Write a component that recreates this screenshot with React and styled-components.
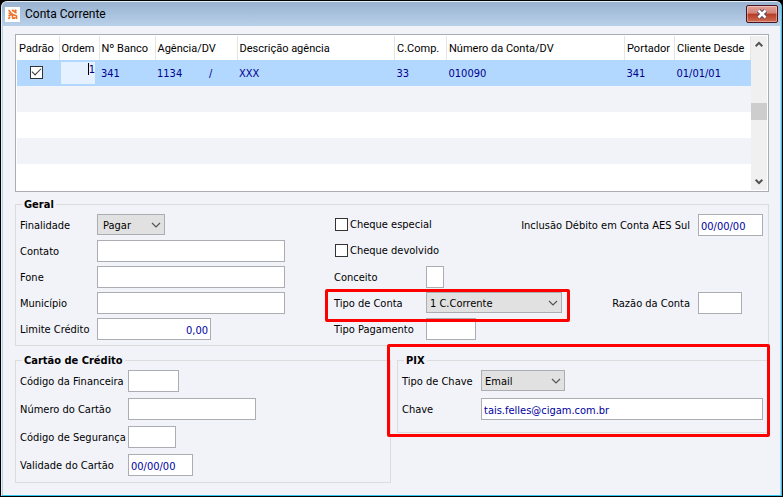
import React, { useState } from 'react';
import styled, { createGlobalStyle, css } from 'styled-components';

const colors = {
  face: '#f2f3f9',
  line: '#dcdcdc',
  edge: '#abadb3',
  navy: '#00008b',
  selected: '#b3d8ff',
  mark: '#ff0000',
};

const fonts = {
  form: '"DejaVu Sans Condensed", "DejaVu Sans", Tahoma, sans-serif',
  grid: 'Roboto, "Liberation Sans", sans-serif',
};

const GlobalStyle = createGlobalStyle`
  *, *::before, *::after {
    box-sizing: border-box;
  }

  body {
    margin: 0;
    background: #000000;
    color: #000000;
    font-family: ${fonts.form};
    font-size: 11px;
  }
`;

const Window = styled.main`
  display: flex;
  flex-direction: column;
  min-height: 100vh;
  padding: 1px;
  background: #000000;
`;

const Frame = styled.div`
  flex: 1;
  display: flex;
  flex-direction: column;
  border: 1px solid #e6f0fa;
  border-right-color: #35c6ee;
  border-bottom-color: #35c6ee;
  border-radius: 6px 6px 0 0;
  background: ${colors.face};
  overflow: hidden;
`;

const TitleBar = styled.header`
  display: flex;
  align-items: center;
  gap: 5px;
  height: 24px;
  padding: 0 3px;
  background: linear-gradient(#98b2d0, #b9d0e9);
`;

const Logo = styled.svg`
  width: 15px;
  height: 15px;
  background: #ffffff;
`;

const Title = styled.h1`
  flex: 1;
  margin: 0;
  font-family: ${fonts.grid};
  font-size: 12px;
  font-weight: 400;
  line-height: 26px;
`;

const CloseButton = styled.button`
  display: flex;
  align-items: center;
  justify-content: center;
  width: 32px;
  height: 18px;
  padding: 0;
  border: 1px solid #4a1420;
  border-radius: 2px;
  background: linear-gradient(#e3a097 0%, #d58377 45%, #b63a24 50%, #cf6d53 100%);
  box-shadow: inset 0 0 0 1px rgba(255, 255, 255, 0.35);
`;

const Body = styled.div`
  flex: 1;
  padding: 8px 11px 11px 12px;
  border: 1px solid #b9d1ea;
  border-width: 0 1px;
`;

const GridBox = styled.section`
  display: flex;
  margin-bottom: 6px;
  padding: 1px;
  border: 1px solid ${colors.edge};
  background: #ffffff;
`;

const Table = styled.table`
  flex: 1;
  min-width: 0;
  border-collapse: collapse;
  table-layout: fixed;
`;

const HeadCell = styled.th`
  width: ${({ $width }) => ($width ? `${$width}px` : 'auto')};
  height: 24px;
  padding: 0 2px;
  border-right: 1px solid #e5e5e5;
  font-family: ${fonts.grid};
  font-size: 11px;
  font-weight: 400;
  text-align: left;
  white-space: nowrap;
`;

const Row = styled.tr`
  height: 26px;
  background: ${({ $selected, $alt }) =>
    $selected ? colors.selected : $alt ? colors.face : '#ffffff'};
`;

const Cell = styled.td`
  padding: 0 2px;
  color: ${colors.navy};
  white-space: pre;
`;

const TickCell = styled(Cell)`
  padding: 0 4px 2px 0;
  text-align: center;
`;

const Agency = styled.span`
  display: inline-block;
  width: 52px;
`;

const OrderInput = styled.input`
  display: block;
  width: 34px;
  height: 22px;
  padding: 0 0 8px;
  border: 0;
  background: #e6f1ff;
  color: ${colors.navy};
  font: inherit;
  text-align: right;
  outline: none;
`;

const OrderEdit = styled.div`
  position: relative;

  &::after {
    content: '';
    position: absolute;
    top: 1px;
    left: 27px;
    width: 1px;
    height: 12px;
    background: #000000;
  }
`;

const Scrollbar = styled.div`
  display: flex;
  flex-direction: column;
  align-items: center;
  width: 16px;
  background: #f0f0f0;
`;

const ScrollButton = styled.button`
  display: flex;
  align-items: center;
  justify-content: center;
  width: 16px;
  height: 17px;
  padding: 0;
  border: 0;
  background: none;
`;

const Track = styled.div`
  flex: 1;
  align-self: stretch;
  display: grid;
  grid-template-rows: 50fr 17px 53fr;
`;

const Thumb = styled.div`
  grid-row: 2;
  background: #cdcdcd;
`;

const Group = styled.fieldset`
  position: relative;
  display: flex;
  flex-direction: column;
  gap: ${({ $gap }) => $gap || 6}px;
  min-width: 0;
  margin: 0;
  padding: 3px 5px ${({ $bottom }) => $bottom || 6}px 4px;
  border: 1px solid ${colors.line};
`;

const Legend = styled.legend`
  margin-left: 2px;
  padding: 0 2px;
  font-weight: 700;
  line-height: 13px;
`;

const Split = styled.div`
  display: grid;
  grid-template-columns: 376fr 372fr;
  align-items: start;
  gap: 6px;
  margin-top: 8px;
`;

const Line = styled.div`
  display: grid;
  grid-template-columns: 314fr 429fr;
`;

const Side = styled.div`
  display: flex;
  justify-content: space-between;
`;

const FieldBox = styled.div`
  position: relative;
  display: grid;
  grid-template-columns: ${({ $label }) => ($label ? `${$label}px` : 'auto')} minmax(0, 1fr);
  column-gap: ${({ $label }) => ($label ? 0 : 8)}px;
  height: 22px;
  line-height: 22px;
  white-space: nowrap;

  label {
    padding-top: 1px;
  }
`;

const TextBox = styled.input`
  width: ${({ $width }) => ($width ? `${$width}px` : '100%')};
  height: 22px;
  padding: 2px 2px 0;
  border: 1px solid ${colors.edge};
  border-radius: 0;
  background: #ffffff;
  color: #0000a0;
  font: inherit;
  line-height: 18px;
  text-align: ${({ $right }) => ($right ? 'right' : 'left')};
  outline: none;
`;

const SelectBox = styled.div`
  display: grid;
  align-items: center;
  width: ${({ $width }) => $width}px;
  height: 21px;

  select,
  svg {
    grid-area: 1 / 1;
  }

  select {
    appearance: none;
    width: 100%;
    height: 21px;
    padding: 0 18px 0 ${({ $inset }) => $inset || 3}px;
    border: 1px solid ${colors.edge};
    border-radius: 0;
    background: #e1e1e1;
    color: #000000;
    font: inherit;
    outline: none;
  }

  svg {
    justify-self: end;
    margin-right: 4px;
    pointer-events: none;
  }
`;

const Tick = styled.input`
  appearance: none;
  display: inline-grid;
  place-content: center;
  width: 13px;
  height: 13px;
  margin: 0;
  border: 1px solid #333333;
  background: #ffffff;
  vertical-align: middle;

  &:checked::after {
    content: '';
    width: 9px;
    height: 5px;
    margin-bottom: 3px;
    border: solid #333333;
    border-width: 0 0 1px 1px;
    transform: rotate(-45deg);
  }
`;

const TickLabel = styled.label`
  display: flex;
  align-items: center;
  gap: 2px;
  height: 21px;
  padding-left: 1px;
`;

const outline = css`
  content: '';
  position: absolute;
  z-index: 1;
  border: 3px solid ${colors.mark};
  border-radius: 2px;
  pointer-events: none;
`;

const MarkedField = styled(FieldBox)`
  &::after {
    ${outline}
    inset: -3px -8px -8px -9px;
  }
`;

const MarkedGroup = styled(Group)`
  &::after {
    ${outline}
    inset: -23px -2px -5px -11px;
  }
`;

const RightField = styled.div`
  padding-right: 21px;
`;

const columns = [
  { title: 'Padrão', width: 42 },
  { title: 'Ordem', width: 40 },
  { title: 'Nº Banco', width: 56 },
  { title: 'Agência/DV', width: 82 },
  { title: 'Descrição agência' },
  { title: 'C.Comp.', width: 52 },
  { title: 'Número da Conta/DV', width: 178 },
  { title: 'Portador', width: 50 },
  { title: 'Cliente Desde', width: 76 },
];

const Chevron = () => (
  <svg width="10" height="6" viewBox="0 0 10 6" fill="none" stroke="#555555">
    <path d="M1 1l4 4 4-4" strokeWidth="1.2" />
  </svg>
);

const ScrollArrow = ({ up }) => (
  <svg width="8" height="7" viewBox="0 0 8 7" fill="none" stroke="#505050" strokeWidth="2">
    <path d={up ? 'M.7 5.2L4 1.9l3.3 3.3' : 'M.7 1.8L4 5.1l3.3-3.3'} />
  </svg>
);

const Field = ({ id, label, labelWidth, width, value = '', right }) => (
  <FieldBox $label={labelWidth}>
    <label htmlFor={id}>{label}</label>
    <TextBox id={id} defaultValue={value} $width={width} $right={right} />
  </FieldBox>
);

const SelectField = ({ id, label, labelWidth, width, inset, option, as: Box = FieldBox }) => (
  <Box $label={labelWidth}>
    <label htmlFor={id}>{label}</label>
    <SelectBox $width={width} $inset={inset}>
      <select id={id} defaultValue={option}>
        <option>{option}</option>
      </select>
      <Chevron />
    </SelectBox>
  </Box>
);

const CheckField = ({ label }) => (
  <TickLabel>
    <Tick type="checkbox" />
    {label}
  </TickLabel>
);

const Accounts = () => {
  const [standard, setStandard] = useState(true);

  return (
    <GridBox>
      <Table>
        <thead>
          <tr>
            {columns.map(({ title, width }) => (
              <HeadCell key={title} $width={width}>
                {title}
              </HeadCell>
            ))}
          </tr>
        </thead>
        <tbody>
          <Row $selected>
            <TickCell>
              <Tick
                type="checkbox"
                aria-label="Padrão"
                checked={standard}
                onChange={e => setStandard(e.target.checked)}
              />
            </TickCell>
            <Cell>
              <OrderEdit>
                <OrderInput aria-label="Ordem" defaultValue="1" />
              </OrderEdit>
            </Cell>
            <Cell>341</Cell>
            <Cell>
              <Agency>1134</Agency>/
            </Cell>
            <Cell>XXX</Cell>
            <Cell>33</Cell>
            <Cell>010090</Cell>
            <Cell>341</Cell>
            <Cell>01/01/01</Cell>
          </Row>
          {[0, 1, 2, 3].map(i => (
            <Row key={i} $alt={i % 2 === 0}>
              <Cell colSpan={columns.length} />
            </Row>
          ))}
        </tbody>
      </Table>
      <Scrollbar>
        <ScrollButton aria-label="Subir">
          <ScrollArrow up />
        </ScrollButton>
        <Track>
          <Thumb />
        </Track>
        <ScrollButton aria-label="Descer">
          <ScrollArrow />
        </ScrollButton>
      </Scrollbar>
    </GridBox>
  );
};

const General = () => (
  <Group $gap={4} $bottom={5}>
    <Legend>Geral</Legend>
    <Line>
      <SelectField id="finalidade" label="Finalidade" labelWidth={77} width={68} inset={5} option="Pagar" />
      <Side>
        <CheckField label="Cheque especial" />
        <Field id="debito" label="Inclusão Débito em Conta AES Sul" width={65} value="00/00/00" />
      </Side>
    </Line>
    <Line>
      <Field id="contato" label="Contato" labelWidth={77} width={188} />
      <CheckField label="Cheque devolvido" />
    </Line>
    <Line>
      <Field id="fone" label="Fone" labelWidth={77} width={188} />
      <Field id="conceito" label="Conceito" labelWidth={92} width={18} />
    </Line>
    <Line>
      <Field id="municipio" label="Município" labelWidth={77} width={188} />
      <Side>
        <SelectField
          as={MarkedField}
          id="tipoConta"
          label="Tipo de Conta"
          labelWidth={92}
          width={136}
          option="1 C.Corrente"
        />
        <RightField>
          <Field id="razao" label="Razão da Conta" width={44} />
        </RightField>
      </Side>
    </Line>
    <Line>
      <Field id="limite" label="Limite Crédito" labelWidth={77} width={114} value="0,00" right />
      <Field id="pagamento" label="Tipo Pagamento" labelWidth={92} width={50} />
    </Line>
  </Group>
);

const Card = () => (
  <Group>
    <Legend>Cartão de Crédito</Legend>
    <Field id="financeira" label="Código da Financeira" labelWidth={108} width={51} />
    <Field id="cartao" label="Número do Cartão" labelWidth={108} width={128} />
    <Field id="seguranca" label="Código de Segurança" labelWidth={108} width={48} />
    <Field id="validade" label="Validade do Cartão" labelWidth={108} width={65} value="00/00/00" />
  </Group>
);

const Pix = () => (
  <MarkedGroup $bottom={12}>
    <Legend>PIX</Legend>
    <SelectField id="tipoChave" label="Tipo de Chave" labelWidth={79} width={84} option="Email" />
    <Field id="chave" label="Chave" labelWidth={79} value="tais.felles@cigam.com.br" />
  </MarkedGroup>
);

const App = () => (
  <Window>
    <GlobalStyle />
    <Frame>
      <TitleBar>
        <Logo viewBox="0 0 15 15" fill="none" stroke="#f0702a" strokeWidth="1.6">
          <path d="M3.5 3l2 2M7 3l4.5 3M10 3l1.5 1M3.5 6.5l3-1M3.5 9l3.5-2 1 5M3.5 12L5 9.5M8 7.5L11.5 9v3M9.5 10v2" />
        </Logo>
        <Title>Conta Corrente</Title>
        <CloseButton aria-label="Fechar">
          <svg width="12" height="10" viewBox="0 0 12 10">
            <path d="M2.5 1.5l7 7M9.5 1.5l-7 7" stroke="#5a5060" strokeWidth="4.6" />
            <path d="M2.5 1.5l7 7M9.5 1.5l-7 7" stroke="#ffffff" strokeWidth="2.6" />
          </svg>
        </CloseButton>
      </TitleBar>
      <Body>
        <Accounts />
        <General />
        <Split>
          <Card />
          <Pix />
        </Split>
      </Body>
    </Frame>
  </Window>
);

export default App;
